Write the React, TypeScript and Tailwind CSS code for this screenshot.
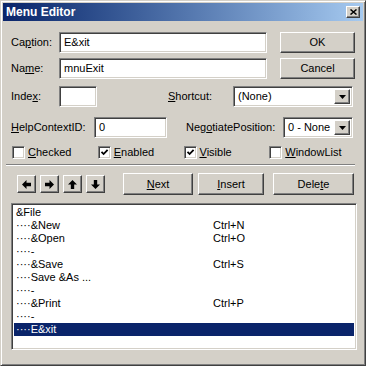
import React from "react"

const sunken =
  "border border-t-[#808080] border-l-[#808080] border-r-white border-b-white shadow-[inset_1px_1px_#404040,inset_-1px_-1px_#d4d0c8] bg-white"
const raised =
  "border border-t-white border-l-white border-r-[#404040] border-b-[#404040] shadow-[inset_-1px_-1px_#808080] bg-[#d4d0c8]"

function Btn({ children, className }: { children: React.ReactNode; className: string }) {
  return <div className={`${raised} flex items-center justify-center h-[21px] ${className}`}>{children}</div>
}

function Field({ value, className }: { value: string; className: string }) {
  return <div className={`${sunken} h-[21px] flex items-center pl-[4px] ${className}`}>{value}</div>
}

function Combo({ value, className }: { value: string; className: string }) {
  return (
    <div className={`${sunken} h-[21px] flex items-stretch p-[2px] ${className}`}>
      <div className="flex-1 flex items-center pl-[2px]">{value}</div>
      <div className={`${raised} w-[16px] flex items-center justify-center`}>
        <svg width="7" height="4" viewBox="0 0 7 4">
          <polygon points="0,0 7,0 3.5,4" fill="black" />
        </svg>
      </div>
    </div>
  )
}

function Check({ checked, label }: { checked: boolean; label: React.ReactNode }) {
  return (
    <div className="w-[87px] flex items-center gap-[3px]">
      <div className={`${sunken} w-[13px] h-[13px] flex items-center justify-center`}>
        {checked && (
          <svg width="9" height="9" viewBox="0 0 9 9">
            <path d="M1.5 3.8 L3.6 6 L7.6 1.8" stroke="black" strokeWidth="1.8" fill="none" />
          </svg>
        )}
      </div>
      <span>{label}</span>
    </div>
  )
}

function Arrow({ rot }: { rot: number }) {
  return (
    <div className={`${raised} w-[19px] h-[18px] flex items-center justify-center`}>
      <svg width="9" height="9" viewBox="0 0 8 8" style={{ transform: `rotate(${rot}deg)` }}>
        <polygon points="0,4 4,0 4,2.5 8,2.5 8,5.5 4,5.5 4,8" fill="black" />
      </svg>
    </div>
  )
}

const ITEMS: [string, string][] = [
  ["&File", ""],
  ["····&New", "Ctrl+N"],
  ["····&Open", "Ctrl+O"],
  ["····-", ""],
  ["····&Save", "Ctrl+S"],
  ["····Save &As ...", ""],
  ["····-", ""],
  ["····&Print", "Ctrl+P"],
  ["····-", ""],
  ["····E&xit", ""],
]

export default function App() {
  return (
    <div
      className="w-[366px] h-[366px] bg-[#d4d0c8] border border-t-[#d4d0c8] border-l-[#d4d0c8] border-r-[#404040] border-b-[#404040] shadow-[inset_1px_1px_white,inset_-1px_-1px_#808080] p-[2px] flex flex-col text-[11px] text-black"
      style={{ fontFamily: '"Liberation Sans", Arial, sans-serif' }}
    >
      <div className="h-[18px] bg-linear-to-r from-[#0a246a] to-[#a6caf0] flex items-center pl-[3px] pr-[3px]">
        <span className="text-white font-bold text-[12px]">Menu Editor</span>
        <div className={`${raised} ml-auto w-[14px] h-[12px] flex items-center justify-center`}>
          <svg width="7" height="6" viewBox="0 0 7 6">
            <path d="M0.5 0.5 L6.5 5.5 M6.5 0.5 L0.5 5.5" stroke="black" strokeWidth="1.5" />
          </svg>
        </div>
      </div>

      <div className="px-[8px] flex flex-col">
        <div className="mt-[11px] flex items-center">
          <span className="w-[48px]">
            Ca<u>p</u>tion:
          </span>
          <Field value="E&xit" className="w-[208px]" />
          <Btn className="ml-auto w-[75px]">OK</Btn>
        </div>
        <div className="mt-[5px] flex items-center">
          <span className="w-[48px]">
            Na<u>m</u>e:
          </span>
          <Field value="mnuExit" className="w-[208px]" />
          <Btn className="ml-auto w-[75px]">Cancel</Btn>
        </div>
        <div className="mt-[7px] flex items-center">
          <span className="w-[48px]">
            Inde<u>x</u>:
          </span>
          <Field value="" className="w-[38px]" />
          <span className="ml-[71px] w-[65px]">
            <u>S</u>hortcut:
          </span>
          <Combo value="(None)" className="w-[120px]" />
        </div>
        <div className="mt-[10px] flex items-center">
          <span className="w-[83px]">
            <u>H</u>elpContextID:
          </span>
          <Field value="0" className="w-[73px]" />
          <span className="ml-[19px] w-[97px]">
            Neg<u>o</u>tiatePosition:
          </span>
          <Combo value="0 - None" className="w-[70px]" />
        </div>
        <div className="mt-[8px] flex items-center pl-[1px] h-[13px]">
          <Check checked={false} label={<><u>C</u>hecked</>} />
          <Check checked={true} label={<><u>E</u>nabled</>} />
          <Check checked={true} label={<><u>V</u>isible</>} />
          <Check checked={false} label={<><u>W</u>indowList</>} />
        </div>
        <div className="mt-[5px] -ml-[5px] h-[2px] border-t border-t-[#808080] border-b border-b-white" />
        <div className="mt-[7px] flex items-center h-[22px]">
          <div className="ml-[6px] flex gap-[4px]">
            <Arrow rot={0} />
            <Arrow rot={180} />
            <Arrow rot={90} />
            <Arrow rot={270} />
          </div>
          <Btn className="ml-[18px] w-[70px] h-[22px]">
            <u>N</u>ext
          </Btn>
          <Btn className="ml-[5px] w-[66px] h-[22px]">
            <u>I</u>nsert
          </Btn>
          <Btn className="ml-[9px] w-[81px] h-[22px]">
            Dele<u>t</u>e
          </Btn>
        </div>
        <div className={`${sunken} mt-[8px] w-[346px] h-[147px] p-[2px] flex flex-col`}>
          {ITEMS.map(([cap, sc], i) => {
            const sel = i === ITEMS.length - 1
            return (
              <div
                key={i}
                className={`h-[13px] flex items-center pl-[2px] leading-[13px] ${sel ? "bg-[#0a246a] text-white" : ""}`}
              >
                <span className="w-[197px] whitespace-pre">{cap}</span>
                <span>{sc}</span>
              </div>
            )
          })}
        </div>
      </div>
    </div>
  )
}
